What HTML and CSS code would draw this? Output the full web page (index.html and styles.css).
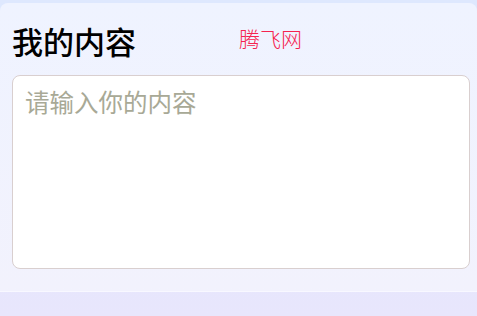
FILE: index.html
```html
<!DOCTYPE html>
<html lang="zh">
<head>
  <meta charset="UTF-8">
  <meta name="viewport" content="width=device-width, initial-scale=1.0">
  <title>我的内容</title>
  <link rel="stylesheet" href="styles.css">
</head>
<body>
  <div class="card">
    <div class="card-header">
      <h1 class="title">我的内容</h1>
      <span class="brand">腾飞网</span>
    </div>
    <textarea class="content-input" placeholder="请输入你的内容"></textarea>
  </div>
</body>
</html>
```

FILE: styles.css
```css
html, body {
    height: 100%;
}
body {
    margin: 0;
    font-family: "Noto Sans CJK SC", "Noto Sans", sans-serif;
    background: linear-gradient(#dee8fe, #e8e6fc);
}
.card {
    margin-top: 3px;
    height: 288px;
    box-sizing: border-box;
    padding: 19px 7px 0 12px;
    background: linear-gradient(#eff3ff, #f2f2fd);
    border-radius: 8px 8px 0 0;
    box-shadow: 0 1px 0 #f8f8ff;
}
.card-header {
    display: grid;
    grid-template-columns: 227px 1fr;
    align-items: start;
}
.title {
    margin: 0;
    font-size: 31px;
    font-weight: 500;
    line-height: 37px;
    color: #000;
}
.brand {
    font-size: 21px;
    line-height: 32px;
    font-weight: 300;
    color: #f5234f;
}
.content-input {
    display: block;
    width: 100%;
    height: 194px;
    margin-top: 16px;
    box-sizing: border-box;
    padding: 8px 12px;
    border: 1px solid #d9cfcf;
    border-radius: 8px;
    background: #fff;
    font-family: inherit;
    font-size: 24.5px;
    line-height: 36px;
    resize: none;
    outline: none;
}
.content-input::placeholder {
    color: #a8a996;
}
```
